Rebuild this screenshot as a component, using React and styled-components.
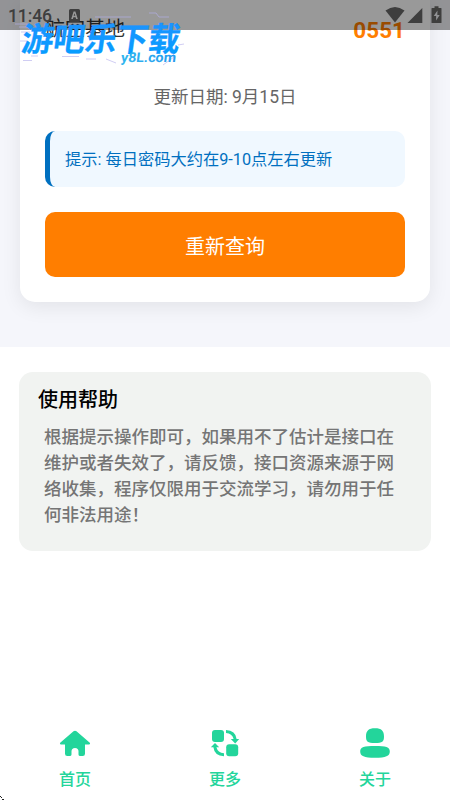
import React from "react";
import styled, { createGlobalStyle } from "styled-components";

const GlobalStyle = createGlobalStyle`
  * { box-sizing: border-box; }
  body { margin: 0; background: #fff; overflow: hidden; }
  body, button { font-family: Roboto, "Noto Sans CJK SC", sans-serif; }
`;

const Screen = styled.div`
  position: relative;
  width: 450px;
  height: 801px;
  overflow: hidden;
  background: #fff;
  display: flex;
  flex-direction: column;
`;

const QueryArea = styled.main`
  height: 347px;
  flex: none;
  padding: 0 20px 45px;
  background: #f5f6fb;
`;

const QueryCard = styled.section`
  height: 302px;
  padding: 15px 25px 25px;
  background: #fff;
  border-radius: 0 0 15px 15px;
  box-shadow: 0 5px 20px rgba(0, 0, 0, 0.08);
  display: flex;
  flex-direction: column;
`;

const PasswordRow = styled.div`
  height: 30px;
  display: flex;
  justify-content: space-between;
  align-items: center;
`;

const PlaceName = styled.span`
  font-size: 20px;
  line-height: 30px;
  color: #333;
  margin-top: -3px;
`;

const Password = styled.strong`
  font-size: 22.5px;
  line-height: 30px;
  font-weight: 700;
  color: #ff7e00;
`;

const UpdateDate = styled.p`
  margin: 39px 0 20px;
  text-align: center;
  font-size: 17.5px;
  line-height: 27px;
  color: #666;
`;

const Notice = styled.div`
  height: 56px;
  flex: none;
  padding: 0 0 2px 15px;
  display: flex;
  align-items: center;
  border-left: 5px solid #0070c0;
  border-radius: 10px;
  background: #f0f8ff;
  color: #0070c0;
  font-size: 16.25px;
`;

const QueryButton = styled.button`
  height: 65px;
  flex: none;
  margin: 25px 0 0;
  padding: 2px 0 0;
  border: 0;
  border-radius: 10px;
  background: #ff7e00;
  color: #fff;
  font-size: 20px;
`;

const HelpCard = styled.section`
  margin: 25px 19px 0;
  height: 179px;
  flex: none;
  padding: 13px 25px 0 19px;
  border-radius: 14px;
  background: #f1f3f1;
`;

const HelpTitle = styled.h2`
  margin: 0;
  font-size: 20px;
  line-height: 30px;
  font-weight: 500;
  color: #000;
`;

const HelpText = styled.p`
  margin: 9px 0 0 6px;
  width: 360px;
  font-size: 17.5px;
  line-height: 26px;
  font-weight: 500;
  color: #757575;
`;

const TabBar = styled.nav`
  margin-top: auto;
  height: 81px;
  display: grid;
  grid-template-columns: repeat(3, 1fr);
`;

const Tab = styled.a`
  display: flex;
  flex-direction: column;
  align-items: center;
  padding-top: 6px;
  color: #23d59b;
  font-size: 16px;
  line-height: 24px;
  font-weight: 500;
`;

const TabIcon = styled.svg`
  width: 34px;
  height: 34px;
  margin-bottom: 8px;
  fill: currentColor;
`;

const StatusBar = styled.header`
  position: absolute;
  inset: 0 0 auto;
  height: 30px;
  padding: 0 8px;
  display: flex;
  align-items: center;
  justify-content: space-between;
  background: rgba(0, 0, 0, 0.4);
  color: #3e3e3e;
`;

const StatusGroup = styled.div`
  display: flex;
  align-items: center;
`;

const Clock = styled.span`
  padding-top: 2px;
  font-size: 17.5px;
  line-height: 30px;
  font-weight: 500;
  letter-spacing: -0.1px;
  width: 60px;
`;

const StatusIcon = styled.svg`
  width: ${({ $w }) => $w}px;
  height: 20px;
  margin-left: ${({ $gap }) => $gap || 0}px;
  fill: currentColor;
`;

const Watermark = styled.svg`
  position: absolute;
  left: 0;
  top: 0;
  width: 200px;
  height: 72px;
  font-family: "Noto Sans CJK SC", sans-serif;
`;

const CornerMark = styled.svg`
  position: absolute;
  left: 0;
  bottom: 0;
  width: 5px;
  height: 5px;
`;

export default function App() {
  return (
    <>
      <GlobalStyle />
      <Screen>
        <QueryArea>
          <QueryCard>
            <PasswordRow>
              <PlaceName>航空基地</PlaceName>
              <Password>0551</Password>
            </PasswordRow>
            <UpdateDate>更新日期: 9月15日</UpdateDate>
            <Notice>提示: 每日密码大约在9-10点左右更新</Notice>
            <QueryButton>重新查询</QueryButton>
          </QueryCard>
        </QueryArea>
        <HelpCard>
          <HelpTitle>使用帮助</HelpTitle>
          <HelpText>
            根据提示操作即可，如果用不了估计是接口在维护或者失效了，请反馈，接口资源来源于网络收集，程序仅限用于交流学习，请勿用于任何非法用途！
          </HelpText>
        </HelpCard>
        <TabBar>
          <Tab>
            <TabIcon viewBox="0 0 34 34">
              <path d="M15.500 5.300q1.500-1.100 3 0L31.800 16.800q1 1.600-.8 1.700H27V27.800q0 2.300-2.300 2.300h-2.400q-1.800 0-1.800-1.600v-3.200q0-3-3.500-3.300-3.500.3-3.500 3.300v3.200q0 1.600-1.800 1.600H9.300Q7 30.100 7 27.800v-9.300H3q-1.800-.1-.8-1.700Z" />
            </TabIcon>
            首页
          </Tab>
          <Tab>
            <TabIcon viewBox="0 0 34 34">
              <rect x="4" y="4" width="12" height="12" rx="3" />
              <rect x="18.200" y="18.200" width="12" height="12" rx="3" />
              <path d="M18 4q9.600.4 10.600 9h2.600L27.200 17.400 22.800 13H25.600q-1.400-5.400-7.600-6ZM16 30.300q-9.600-.4-10.600-9H2.800L7 17l4.200 4.300H8.400q1.400 5.400 7.600 6Z" />
            </TabIcon>
            更多
          </Tab>
          <Tab>
            <TabIcon viewBox="0 0 34 34">
              <path d="M17 2.200c6.500 0 9 2.500 9 8.300 0 5-1.500 6.500-9 6.500s-9-1.500-9-6.500c0-5.800 2.500-8.300 9-8.300ZM17 20c11 0 14.800 1 14.800 5.500S28 31.800 17 31.800 2.200 30 2.200 25.500 6 20 17 20Z" />
            </TabIcon>
            关于
          </Tab>
        </TabBar>
        <StatusBar>
          <StatusGroup>
            <Clock>11:46</Clock>
            <StatusIcon $w={13} viewBox="0 0 13 20">
              <path fillRule="evenodd" d="M2.500 4h8Q12 4 12 5.500v10Q12 17 10.500 17h-8Q1 17 1 15.500v-10Q1 4 2.500 4ZM5.600 6.500 3.200 14h1.700l.5-1.700h2.200l.5 1.700h1.700L7.400 6.500ZM6.500 8.200l.8 2.600H5.700Z" />
            </StatusIcon>
          </StatusGroup>
          <StatusGroup>
            <StatusIcon $w={20} viewBox="0 0 20 20">
              <path d="M.5 5.500Q10-1.500 19.500 5.500L10 17.500Z" />
            </StatusIcon>
            <StatusIcon $w={16} $gap={2} viewBox="0 0 16 20">
              <path d="M15.300 3v15H.5Z" />
            </StatusIcon>
            <StatusIcon $w={11} $gap={8} viewBox="0 0 11 20">
              <path fillRule="evenodd" d="M3.500 1.200h4V3H10q.5 0 .5.500v14q0 .5-.5.500H1q-.5 0-.5-.5v-14Q.5 3 1 3h2.500ZM6.500 5.500 2.700 11h2.400v4.500L8.700 10H6.300Z" />
            </StatusIcon>
          </StatusGroup>
        </StatusBar>
        <Watermark viewBox="0 0 200 72">
          <defs>
            <linearGradient id="brand" x1="0" x2="0" y1="0" y2="1">
              <stop stopColor="#2490ff" />
              <stop offset="1" stopColor="#00a0ff" />
            </linearGradient>
            <linearGradient id="domain" x1="0" x2="1">
              <stop stopColor="#30b6ef" />
              <stop offset="1" stopColor="#269bef" />
            </linearGradient>
          </defs>
          <g fill="none" stroke="#b5b1ec" strokeWidth="0.800" opacity="0.800">
            <path d="M15 24h12M19 27h10M21 32h9M20 41h7M31 56h7M62 56.500h17M23 60.500h9M86 59h10M106 59l10 4M95 17h36M149 13h7l3 4h10M178 45l6-1M177 51l-7 7M174 57l-11 8" />
          </g>
          <text transform="translate(20.500 50.500) skewX(-8) scale(1 1)" textLength="158" lengthAdjust="spacingAndGlyphs" fontSize="33" fontWeight="700" fill="url(#brand)" stroke="#148fff" strokeWidth="0.300">游吧乐下载</text>
          <text transform="translate(120.500 62) skewX(-7)" textLength="55" lengthAdjust="spacingAndGlyphs" fontFamily="Roboto" fontSize="13.500" fontWeight="700" fill="url(#domain)">y8L.com</text>
        </Watermark>
        <CornerMark viewBox="0 0 5 5">
          <path d="M0 0v1h1V0ZM1 1v1h1V1ZM2 3v1h2V3Z" fill="#222" />
        </CornerMark>
      </Screen>
    </>
  );
}
